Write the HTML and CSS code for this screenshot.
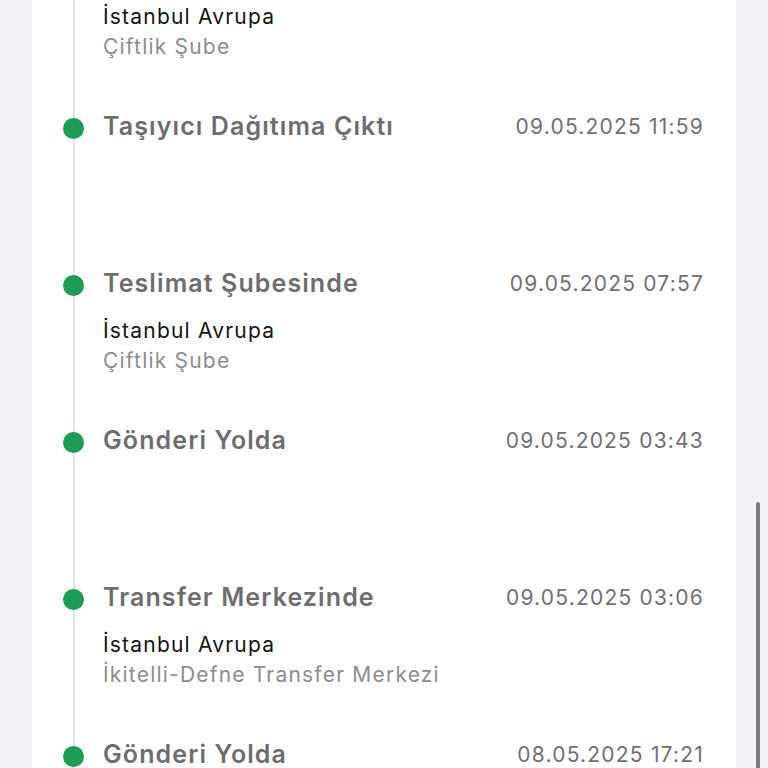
FILE: index.html
```html
<!DOCTYPE html>
<html lang="tr">
<head>
	<meta charset="UTF-8">
	<meta name="viewport" content="width=device-width, initial-scale=1.0">
	<title>Gönderi Hareketleri</title>
	<link rel="stylesheet" href="styles.css">
</head>
<body>
    <div class="card">
        <ul class="timeline">
            <li class="item">
                <div class="rail"><span class="dot"></span></div>
                <div class="info">
                    <div class="head">
                        <span class="title">Teslimat Şubesinde</span>
                        <span class="date">09.05.2025 11:02</span>
                    </div>
                    <div class="place">
                        <p class="city">İstanbul Avrupa</p>
                        <p class="branch">Çiftlik Şube</p>
                    </div>
                </div>
            </li>
            <li class="item">
                <div class="rail"><span class="dot"></span></div>
                <div class="info">
                    <div class="head">
                        <span class="title">Taşıyıcı Dağıtıma Çıktı</span>
                        <span class="date">09.05.2025 11:59</span>
                    </div>
                </div>
            </li>
            <li class="item">
                <div class="rail"><span class="dot"></span></div>
                <div class="info">
                    <div class="head">
                        <span class="title">Teslimat Şubesinde</span>
                        <span class="date">09.05.2025 07:57</span>
                    </div>
                    <div class="place">
                        <p class="city">İstanbul Avrupa</p>
                        <p class="branch">Çiftlik Şube</p>
                    </div>
                </div>
            </li>
            <li class="item">
                <div class="rail"><span class="dot"></span></div>
                <div class="info">
                    <div class="head">
                        <span class="title">Gönderi Yolda</span>
                        <span class="date">09.05.2025 03:43</span>
                    </div>
                </div>
            </li>
            <li class="item">
                <div class="rail"><span class="dot"></span></div>
                <div class="info">
                    <div class="head">
                        <span class="title">Transfer Merkezinde</span>
                        <span class="date">09.05.2025 03:06</span>
                    </div>
                    <div class="place">
                        <p class="city">İstanbul Avrupa</p>
                        <p class="branch">İkitelli-Defne Transfer Merkezi</p>
                    </div>
                </div>
            </li>
            <li class="item">
                <div class="rail"><span class="dot"></span></div>
                <div class="info">
                    <div class="head">
                        <span class="title">Gönderi Yolda</span>
                        <span class="date">08.05.2025 17:21</span>
                    </div>
                </div>
            </li>
        </ul>
    </div>
    <div class="scrollbar"></div>
</body>
</html>
```

FILE: styles.css
```css
* {
	padding: 0;
	margin: 0;
	box-sizing: border-box;
}
html, body {
	height: 100%;
	overflow: hidden;
}
body {
	background: #f2f2f6;
	font-family: Inter, "Noto Sans", "Liberation Sans", sans-serif;
	color: #111;
}
ul {
	list-style: none;
}

.card {
	margin: -46px 32px 0 32px;
	background: #fff;
	padding-right: 32px;
}

.item {
	display: grid;
	grid-template-columns: 71px 1fr;
	min-height: 157px;
}
.rail {
	/* dikey çizgi */
	background: linear-gradient(#e4e4e6, #e4e4e6) no-repeat 41px 0 / 2px 100%;
}
.dot {
	display: block;
	width: 21px;
	height: 21px;
	margin: 7px 0 0 31px;
	border-radius: 50%;
	background: #1b9d55;
}

.head {
	display: flex;
	justify-content: space-between;
	align-items: center;
	height: 30px;
}
.title {
	font-size: 25px;
	font-weight: 600;
	letter-spacing: 1.1px;
	color: #6d6d70;
}
.date {
	font-size: 21px;
	letter-spacing: 1.2px;
	color: #707073;
}

.place {
	margin-top: 18px;
	font-size: 21px;
	line-height: 30px;
	letter-spacing: 1.2px;
}
.city {
	color: #141414;
}
.branch {
	color: #8c8c90;
}

.scrollbar {
	position: fixed;
	right: 8px;
	top: 502px;
	width: 4px;
	height: 300px;
	border-radius: 2px;
	background: #7d7d7f;
}
```
